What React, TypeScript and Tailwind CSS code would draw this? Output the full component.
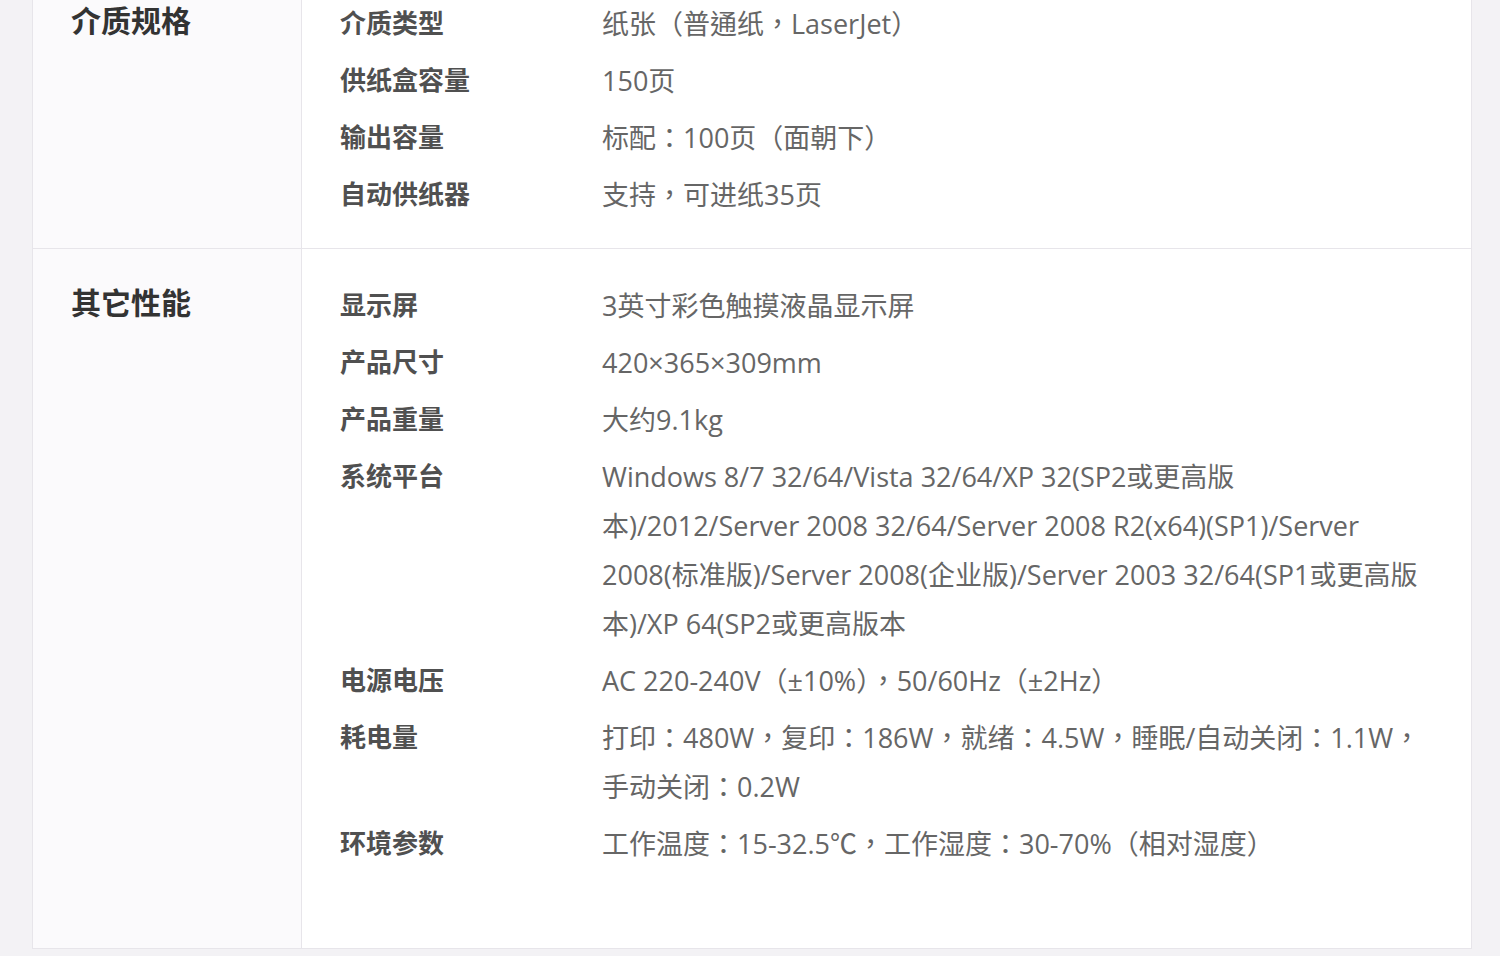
import React from 'react';

type Spec = { label: string; value: string | string[] };
type Section = { title: string; rows: Spec[]; last?: boolean };

const sections: Section[] = [
  {
    title: '介质规格',
    rows: [
      { label: '介质类型', value: '纸张（普通纸，LaserJet）' },
      { label: '供纸盒容量', value: '150页' },
      { label: '输出容量', value: '标配：100页（面朝下）' },
      { label: '自动供纸器', value: '支持，可进纸35页' },
    ],
  },
  {
    title: '其它性能',
    last: true,
    rows: [
      { label: '显示屏', value: '3英寸彩色触摸液晶显示屏' },
      { label: '产品尺寸', value: '420×365×309mm' },
      { label: '产品重量', value: '大约9.1kg' },
      {
        label: '系统平台',
        value: [
          'Windows 8/7 32/64/Vista 32/64/XP 32(SP2或更高版',
          '本)/2012/Server 2008 32/64/Server 2008 R2(x64)(SP1)/Server',
          '2008(标准版)/Server 2008(企业版)/Server 2003 32/64(SP1或更高版',
          '本)/XP 64(SP2或更高版本',
        ],
      },
      { label: '电源电压', value: 'AC 220-240V（±10%），50/60Hz（±2Hz）' },
      {
        label: '耗电量',
        value: ['打印：480W，复印：186W，就绪：4.5W，睡眠/自动关闭：1.1W，', '手动关闭：0.2W'],
      },
      { label: '环境参数', value: '工作温度：15-32.5℃，工作湿度：30-70%（相对湿度）' },
    ],
  },
];

function SpecSection({ title, rows, last }: Section) {
  return (
    <div className="flex border-b border-[#e7e5ea]">
      {/* 左侧分类标题 */}
      <div className="w-[269px] shrink-0 bg-[#fbfafc] border-r border-[#e7e5ea] pl-[38px] pt-[29px]">
        <h3 className="text-[30px] leading-[49px] font-bold text-[#333]">{title}</h3>
      </div>
      {/* 右侧参数列表 */}
      <div className={`flex-1 pl-[38px] pr-[40px] pt-[32px] flex flex-col gap-[8px] ${last ? 'pb-[80px]' : 'pb-[29px]'}`}>
        {rows.map((row) => (
          <div key={row.label} className="flex">
            <div className="w-[262px] shrink-0 text-[26px] leading-[49px] font-bold text-[#505050]">
              {row.label}
            </div>
            <div
              className="flex-1 text-[27px] leading-[49px] text-[#666] whitespace-nowrap"
              style={{ fontFamily: '"Open Sans", "Noto Sans CJK TC", sans-serif' }}
            >
              {Array.isArray(row.value) ? row.value.map((line) => <div key={line}>{line}</div>) : row.value}
            </div>
          </div>
        ))}
      </div>
    </div>
  );
}

export default function App() {
  return (
    <div
      className="min-h-screen bg-[#f3f2f5] px-[32px] pr-[28px] overflow-hidden"
      style={{ fontFamily: '"Open Sans", "Noto Sans CJK SC", sans-serif' }}
    >
      <div className="-mt-[33px] bg-white border-x border-[#e7e5ea]">
        {sections.map((s) => (
          <SpecSection key={s.title} {...s} />
        ))}
      </div>
    </div>
  );
}
